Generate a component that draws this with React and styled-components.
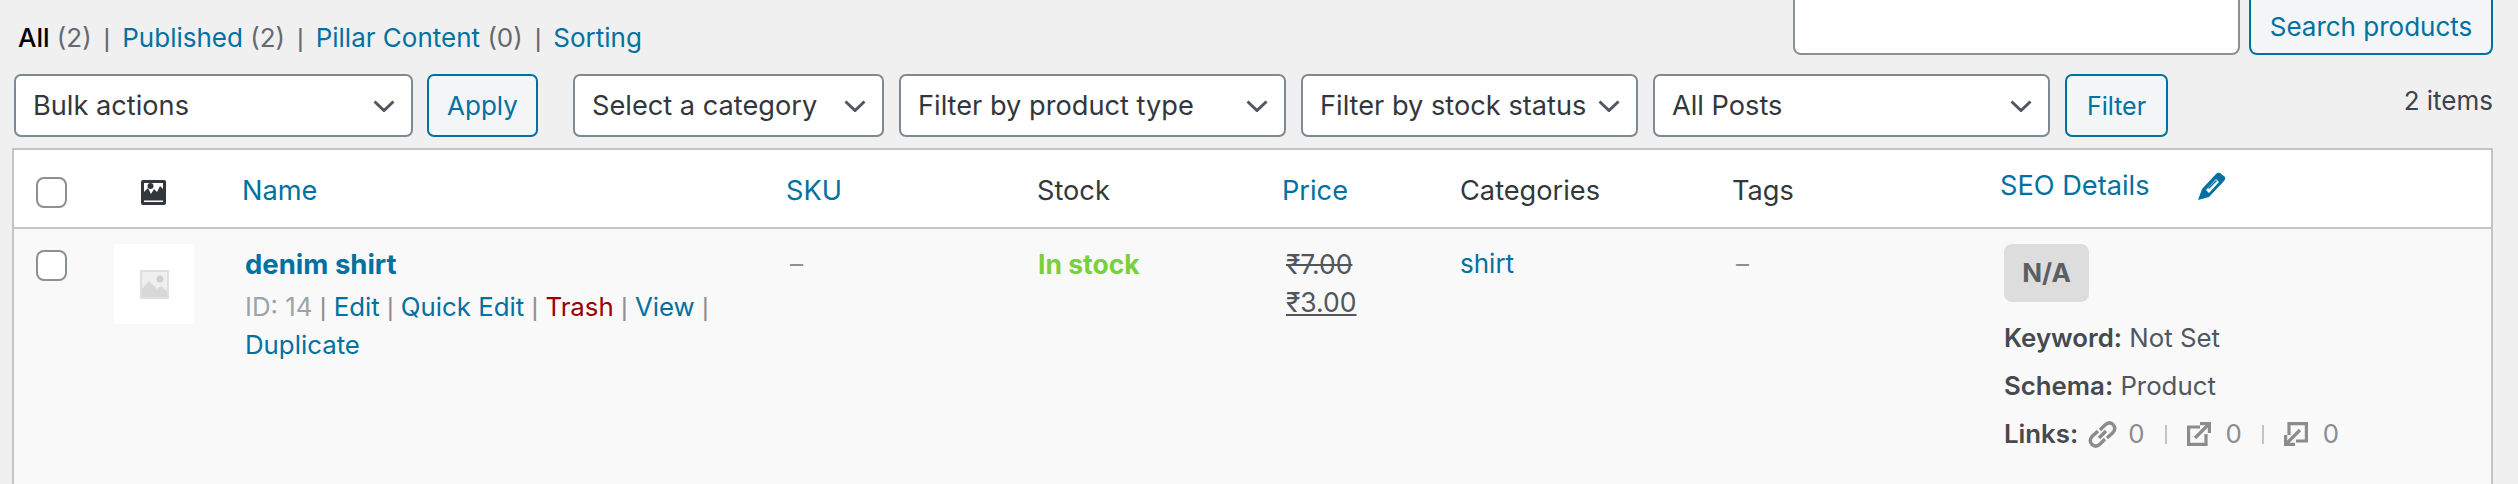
import styled, { createGlobalStyle } from "styled-components";

const GlobalStyle = createGlobalStyle`
  html, body {
    margin: 0;
    background: #f0f0f1;
  }
  body {
    font-family: Inter, "Noto Sans", "Liberation Sans", sans-serif;
    font-size: 26px;
    color: #3c434a;
  }
`;

const filters = [
  { label: "Select a category", width: 311 },
  { label: "Filter by product type", width: 387 },
  { label: "Filter by stock status", width: 337 },
  { label: "All Posts", width: 397 },
];

const Chevron = () => (
  <svg width="22" height="12" viewBox="0 0 22 12" fill="none">
    <path d="M1.5 1.5 L11 10.5 L20.5 1.5" stroke="#50575e" strokeWidth="3" />
  </svg>
);

const ImageGlyph = () => (
  <svg width="25" height="25" viewBox="0 0 25 25">
    <rect width="25" height="25" rx="2" fill="#32373c" />
    <path d="M3 3 H22 V20 H3 Z" fill="#fff" />
    <path d="M3 12 L7 8 L10 14 L13 9 L16 12 L19 6 L22 9 V20 H3 Z" fill="#32373c" />
    <circle cx="9.500" cy="6" r="3" fill="#32373c" />
    <rect x="3" y="20.500" width="19" height="1.500" fill="#fff" />
  </svg>
);

const PlaceholderGlyph = () => (
  <svg width="29" height="29" viewBox="0 0 29 29">
    <rect width="29" height="29" fill="#dfdfe1" />
    <rect x="2" y="2" width="25" height="25" fill="#efeff0" />
    <circle cx="20" cy="9" r="3.400" fill="#d0d0d3" />
    <path d="M2 19 L9 11 L17 19 L21 16 L27 21 V27 H2 Z" fill="#d8d8db" />
  </svg>
);

const Pencil = () => (
  <svg width="28" height="28" viewBox="0 0 28 28">
    <path d="M0 28 L4 17 L18 2 Q20 0 22 1 L27 5 Q28 7 26 9 L11 25 Z" fill="#0071a1" />
    <path d="M8 18 L18 7 L21 10 L11 21 Z" fill="#fff" />
    <path d="M10 16 L18 8 L19 9 L11 17 Z" fill="#0071a1" />
  </svg>
);

const ChainIcon = () => (
  <svg width="29" height="29" viewBox="0 0 29 29" fill="none" stroke="#8c8c8c" strokeWidth="3.400">
    <path d="M12 10 L17 5 Q21 1 25 4.500 Q28.500 8.500 25 12.500 L19 18" />
    <path d="M17 19 L12 24 Q8 28 4 24.500 Q0.500 20.500 4 16.500 L10 11" />
    <path d="M11 18 L18 11" />
  </svg>
);

const OutIcon = () => (
  <svg width="24" height="24" viewBox="0 0 24 24" fill="none" stroke="#8c8c8c" strokeWidth="3.200">
    <path d="M13 5 H1.600 V22.400 H19 V12" />
    <path d="M8 16 L21 3" />
    <path d="M13 1.600 H22.400 V11" />
  </svg>
);

const InIcon = () => (
  <svg width="24" height="24" viewBox="0 0 24 24" fill="none" stroke="#8c8c8c" strokeWidth="3.200">
    <path d="M5 13 V1.600 H22.400 V19 H12" />
    <path d="M16 8 L3 21" />
    <path d="M1.600 13 V22.400 H11" />
  </svg>
);

const App = () => {
  return (
    <>
      <GlobalStyle />
      <Page>
        <TopRow>
          <Views>
            <strong>All</strong> <Count>(2)</Count> <Sep>|</Sep> <Link>Published</Link> <Count>(2)</Count> <Sep>|</Sep>{" "}
            <Link>Pillar Content</Link> <Count>(0)</Count> <Sep>|</Sep> <Link>Sorting</Link>
          </Views>
          <SearchBox>
            <SearchInput />
            <SearchButton>Search products</SearchButton>
          </SearchBox>
        </TopRow>

        <Toolbar>
          <Group $gap={14}>
            <SelectBox $width={399}>
              Bulk actions
              <Chevron />
            </SelectBox>
            <Button $width={111}>Apply</Button>
          </Group>
          <Group $gap={15}>
            {filters.map((item, index) => (
              <SelectBox $width={item.width} key={index}>
                {item.label}
                <Chevron />
              </SelectBox>
            ))}
            <Button $width={103} $small>Filter</Button>
          </Group>
          <ItemCount>2 items</ItemCount>
        </Toolbar>

        <Table>
          <colgroup>
            <col style={{ width: 100 }} />
            <col style={{ width: 128 }} />
            <col style={{ width: 544 }} />
            <col style={{ width: 251 }} />
            <col style={{ width: 245 }} />
            <col style={{ width: 178 }} />
            <col style={{ width: 272 }} />
            <col style={{ width: 268 }} />
            <col />
          </colgroup>
          <thead>
            <tr>
              <HeadCell $left={22} $top={27}><CheckBox /></HeadCell>
              <HeadCell $left={27} $top={27}><ImageGlyph /></HeadCell>
              <HeadCell><Link>Name</Link></HeadCell>
              <HeadCell><Link>SKU</Link></HeadCell>
              <HeadCell>Stock</HeadCell>
              <HeadCell><Link>Price</Link></HeadCell>
              <HeadCell>Categories</HeadCell>
              <HeadCell>Tags</HeadCell>
              <HeadCell $top={17}>
                <SeoHead>
                  <Link>SEO Details</Link>
                  <Pencil />
                </SeoHead>
              </HeadCell>
            </tr>
          </thead>
          <tbody>
            <tr>
              <Cell $left={22} $top={21}><CheckBox /></Cell>
              <Cell $left={0} $top={15}>
                <Thumb><PlaceholderGlyph /></Thumb>
              </Cell>
              <Cell $left={3}>
                <ProductName>denim shirt</ProductName>
                <RowActions>
                  <Muted>ID: 14</Muted> <Bar>|</Bar> <Link>Edit</Link> <Bar>|</Bar> <Link>Quick Edit</Link> <Bar>|</Bar>{" "}
                  <Trash>Trash</Trash> <Bar>|</Bar> <Link>View</Link> <Bar>|</Bar> <Link>Duplicate</Link>
                </RowActions>
              </Cell>
              <Cell><Dash>–</Dash></Cell>
              <Cell $left={1}><InStock>In stock</InStock></Cell>
              <Cell>
                <OldPrice>₹7.00</OldPrice>
                <NewPrice>₹3.00</NewPrice>
              </Cell>
              <Cell $left={0}><Link>shirt</Link></Cell>
              <Cell><Dash>–</Dash></Cell>
              <Cell $top={15}>
                <Badge>N/A</Badge>
                <SeoLine><b>Keyword:</b> Not Set</SeoLine>
                <SeoLine><b>Schema:</b> Product</SeoLine>
                <LinksLine>
                  <b>Links:</b>
                  <LinkStat $ml={10} $gap={11}><ChainIcon /><Zero>0</Zero></LinkStat>
                  <Divider />
                  <LinkStat><OutIcon /><Zero>0</Zero></LinkStat>
                  <Divider />
                  <LinkStat><InIcon /><Zero>0</Zero></LinkStat>
                </LinksLine>
              </Cell>
            </tr>
          </tbody>
        </Table>
      </Page>
    </>
  );
};

const Page = styled.div`
  width: 2518px;
  height: 484px;
  overflow: hidden;
  box-sizing: border-box;
`;

const TopRow = styled.div`
  display: flex;
  justify-content: space-between;
  align-items: flex-start;
  height: 55px;
  padding: 0 25px 0 18px;
`;

const Views = styled.div`
  margin-top: 20px;
  line-height: 36px;
  color: #50575e;
  strong {
    font-weight: 500;
    color: #000;
  }
`;

const Count = styled.span`
  color: #646970;
`;

const Sep = styled.span`
  font-family: "Liberation Sans", sans-serif;
  color: #646970;
  margin: 0 4.600px;
`;

const Link = styled.span`
  color: #0071a1;
`;

const SearchBox = styled.div`
  display: flex;
  gap: 9px;
`;

const SearchInput = styled.div`
  width: 447px;
  height: 55px;
  box-sizing: border-box;
  background: #fff;
  border: 2px solid #8c8f94;
  border-top: none;
  border-radius: 0 0 8px 8px;
`;

const SearchButton = styled.div`
  width: 244px;
  height: 55px;
  box-sizing: border-box;
  display: flex;
  align-items: center;
  justify-content: center;
  background: #f3f5f6;
  color: #0071a1;
  border: 2px solid #0071a1;
  border-top: none;
  border-radius: 0 0 8px 8px;
`;

const Toolbar = styled.div`
  display: flex;
  align-items: flex-start;
  gap: 35px;
  margin-top: 19px;
  padding: 0 25px 0 14px;
`;

const Group = styled.div`
  display: flex;
  gap: ${(p) => p.$gap}px;
`;

const SelectBox = styled.div`
  width: ${(p) => p.$width}px;
  height: 63px;
  box-sizing: border-box;
  display: flex;
  align-items: center;
  justify-content: space-between;
  padding: 0 16px 0 17px;
  font-size: 27.2px;
  background: #fff;
  color: #32373c;
  border: 2px solid #7e8993;
  border-radius: 7px;
  white-space: nowrap;
`;

const Button = styled.div`
  width: ${(p) => p.$width}px;
  height: 63px;
  box-sizing: border-box;
  display: flex;
  align-items: center;
  justify-content: center;
  background: #f3f5f6;
  color: #0071a1;
  border: 2px solid #0071a1;
  border-radius: 7px;
  font-size: ${(p) => (p.$small ? 25 : 26)}px;
`;

const ItemCount = styled.div`
  margin-left: auto;
  margin-top: 11px;
  color: #3c434a;
  white-space: nowrap;
`;

const Table = styled.table`
  width: 2481px;
  height: 345px;
  margin: 11px 0 0 12px;
  table-layout: fixed;
  border-collapse: separate;
  border-spacing: 0;
  background: #f9f9f9;
  border: 2px solid #c3c4c7;
  border-bottom: none;
`;

const HeadCell = styled.th`
  height: 79px;
  box-sizing: border-box;
  padding: ${(p) => p.$top ?? 22}px 0 0 ${(p) => p.$left ?? 0}px;
  vertical-align: top;
  text-align: left;
  font-size: 27.2px;
  font-weight: 400;
  line-height: 38px;
  background: #fff;
  color: #32373c;
  border-bottom: 2px solid #c3c4c7;
`;

const SeoHead = styled.div`
  display: flex;
  align-items: center;
  gap: 48px;
`;

const CheckBox = styled.div`
  width: 31px;
  height: 31px;
  box-sizing: border-box;
  background: #fff;
  border: 2px solid #8c8f94;
  border-radius: 8px;
`;

const Cell = styled.td`
  padding: ${(p) => p.$top ?? 16}px 0 0 ${(p) => p.$left ?? 4}px;
  vertical-align: top;
  line-height: 38px;
  color: #50575e;
`;

const Thumb = styled.div`
  width: 80px;
  height: 80px;
  display: flex;
  align-items: center;
  justify-content: center;
  background: #fff;
`;

const ProductName = styled.div`
  font-size: 27.5px;
  font-weight: 700;
  color: #0071a1;
`;

const RowActions = styled.div`
  width: 480px;
  margin-top: 5px;
  font-size: 25.8px;
  color: #a0a5aa;
`;

const Muted = styled.span`
  color: #9ea3a8;
`;

const Bar = styled.span`
  font-family: "Liberation Sans", sans-serif;
  color: #8c8f94;
`;

const Trash = styled.span`
  color: #990000;
`;

const Dash = styled.span`
  color: #8c8f94;
`;

const InStock = styled.span`
  font-size: 26.5px;
  font-weight: 700;
  color: #7ad03a;
`;

const OldPrice = styled.div`
  font-size: 26.5px;
  text-decoration: line-through;
  color: #50575e;
`;

const NewPrice = styled.div`
  font-size: 26.5px;
  text-decoration: underline;
  color: #50575e;
`;

const Badge = styled.div`
  width: 85px;
  height: 58px;
  display: flex;
  align-items: center;
  justify-content: center;
  background: #dddddd;
  border-radius: 8px;
  font-weight: 700;
  color: #5c5f62;
  margin-bottom: 12px;
`;

const SeoLine = styled.div`
  line-height: 48px;
  font-size: 25.8px;
  color: #50575e;
  b {
    font-weight: 600;
    color: #46494d;
  }
`;

const LinksLine = styled(SeoLine)`
  display: flex;
  align-items: center;
`;

const LinkStat = styled.span`
  display: inline-flex;
  align-items: center;
  gap: ${(p) => p.$gap ?? 15}px;
  margin-left: ${(p) => p.$ml ?? 0}px;
`;

const Zero = styled.span`
  color: #8c8c8c;
`;

const Divider = styled.span`
  width: 2px;
  height: 19px;
  background: #c5c5c5;
  margin: 0 20px;
`;

export default App;
